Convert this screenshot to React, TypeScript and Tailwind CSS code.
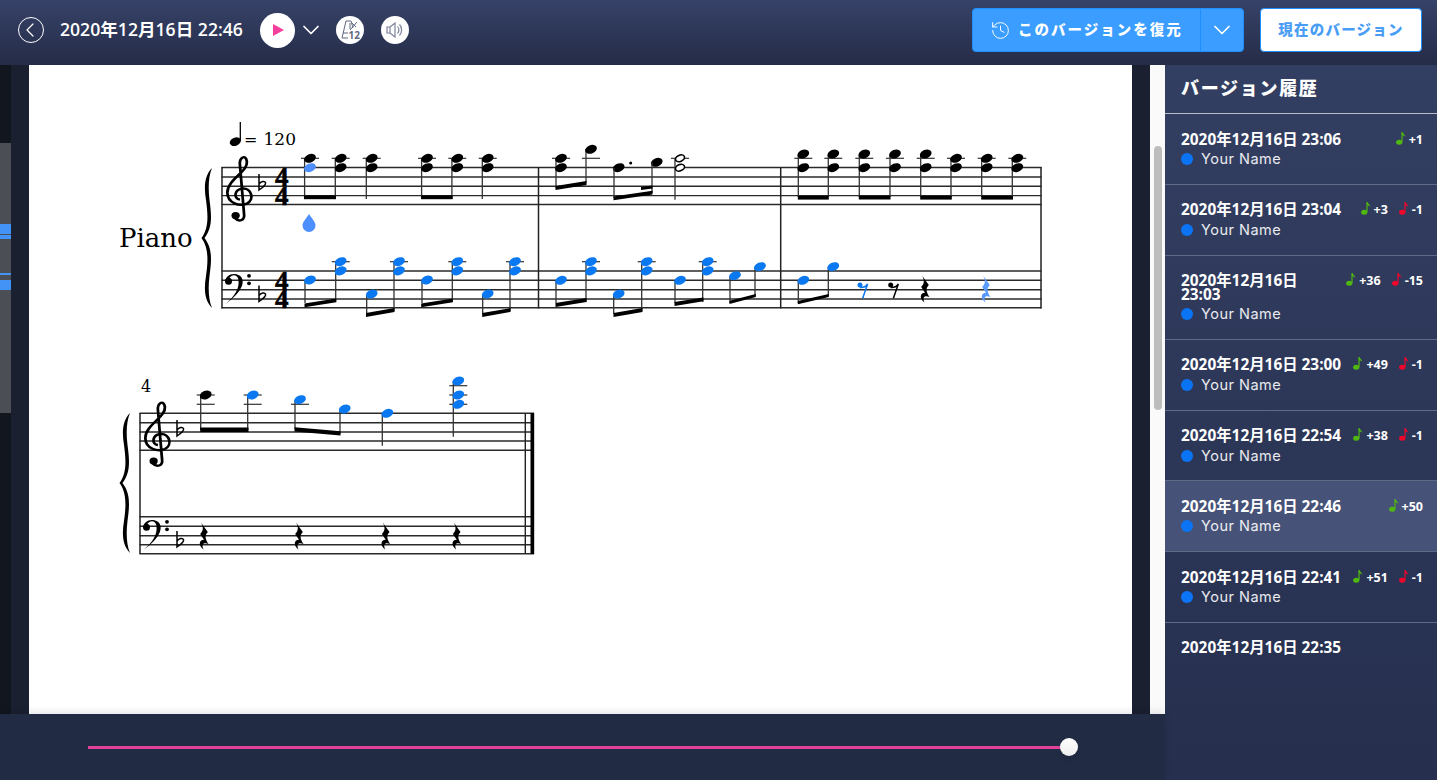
import { ChevronDown, ChevronLeft, History } from "lucide-react";

const BLUE = "#0a78f0";
const LIGHT = "#4d8fff";
const INK = "#000";

const versions = [
  { date: "2020年12月16日 23:06", name: true, add: "+1" },
  { date: "2020年12月16日 23:04", name: true, add: "+3", del: "-1" },
  { date: "2020年12月16日 23:03", name: true, add: "+36", del: "-15" },
  { date: "2020年12月16日 23:00", name: true, add: "+49", del: "-1" },
  { date: "2020年12月16日 22:54", name: true, add: "+38", del: "-1" },
  { date: "2020年12月16日 22:46", name: true, add: "+50", active: true },
  { date: "2020年12月16日 22:41", name: true, add: "+51", del: "-1" },
  { date: "2020年12月16日 22:35" },
];

function NoteIcon({ color }: { color: string }) {
  return (
    <svg width="10" height="14" viewBox="0 0 10 14" className="shrink-0">
      <ellipse cx="3.2" cy="11.2" rx="3.1" ry="2.5" fill={color} />
      <path d="M5.4 11V1h1.2c.3 2 2.6 2.6 2.8 5-.9-1.2-2-1.7-2.8-1.8V11z" fill={color} />
    </svg>
  );
}

function Metronome() {
  return (
    <svg width="20" height="22" viewBox="0 0 20 22" fill="none" stroke="#62677f" strokeWidth="1">
      <path d="M6 2h5l2 7M6 2 2 19h6" />
      <path d="M9 5h2M9 7h2M9 9h2" />
      <path d="m10 11 7-8M12 4l4 4" />
      <path d="M3 14h5" />
      <text x="8.5" y="20" fontSize="10" fontWeight="700" fill="#62677f" stroke="none" fontFamily="Open Sans, sans-serif">12</text>
    </svg>
  );
}

function Speaker() {
  return (
    <svg width="20" height="18" viewBox="0 0 20 18" fill="none" stroke="#7d8299" strokeWidth="1.2">
      <path d="M2 6h3v6H2zM5 6l5-4v14l-5-4" />
      <path d="M12.5 5.5c1.6 2 1.6 5 0 7M14.5 3.5c2.8 3 2.8 8 0 11" />
    </svg>
  );
}

// ---- score drawing, in page coordinates ----

function Head({ x, y, color = INK }: { x: number; y: number; color?: string }) {
  return <ellipse cx={x} cy={y} rx="6.1" ry="4.2" fill={color} transform={`rotate(-22 ${x} ${y})`} />;
}

function Stem({ x, y1, y2 }: { x: number; y1: number; y2: number }) {
  return <line x1={x} x2={x} y1={y1} y2={y2} stroke="#333" strokeWidth="1.3" />;
}

function Ledger({ x, y, w = 9 }: { x: number; y: number; w?: number }) {
  return <line x1={x - w} x2={x + w} y1={y} y2={y} stroke="#333" strokeWidth="1.2" />;
}

function Beam({ x1, y1, x2, y2, h = 3.8 }: { x1: number; y1: number; x2: number; y2: number; h?: number }) {
  return <polygon points={`${x1},${y1 - h / 2} ${x2},${y2 - h / 2} ${x2},${y2 + h / 2} ${x1},${y1 + h / 2}`} fill={INK} />;
}

function Staff({ x1, x2, ys }: { x1: number; x2: number; ys: number[] }) {
  return (
    <>
      {ys.map((y) => (
        <line key={y} x1={x1} x2={x2} y1={y} y2={y} stroke="#2a2a2a" strokeWidth="1.4" />
      ))}
    </>
  );
}

function TrebleClef({ x, y }: { x: number; y: number }) {
  return (
    <g transform={`translate(${x} ${y}) scale(1.15 1)`}>
      <path
        d="M-5 22C-1 27 4.500 25 3.500 18L0-30C-1-38 5-42 6-34C7-24-11-16-11-3C-11 8 0 11 6 8C13 4 10-8 2-7C-5-6-6 3 0 4"
        fill="none"
        stroke={INK}
        strokeWidth="2.400"
      />
      <circle cx="-3.800" cy="20" r="3.600" fill={INK} />
    </g>
  );
}

function BassClef({ x, y }: { x: number; y: number }) {
  return (
    <g transform={`translate(${x} ${y})`}>
      <path d="M-.5 1.500C-1-5 7-8.500 13-5C20-1 18 11-1 24C9 16 13.500 8 12.500 0C12-6 6-6.500 3.500-2.500z" fill={INK} />
      <circle cx="2.500" cy="1" r="3.500" fill={INK} />
      <circle cx="23" cy="-4.500" r="1.900" fill={INK} />
      <circle cx="23" cy="3" r="1.900" fill={INK} />
    </g>
  );
}

function Flat({ x, y }: { x: number; y: number }) {
  return (
    <g transform={`translate(${x} ${y})`}>
      <path d="M-3-11V5C0 3 4.500 0 3.500-2.500C2.500-4.500-1-3.500-3-1" fill="none" stroke={INK} strokeWidth="1.500" />
    </g>
  );
}

function TimeSig({ x, y }: { x: number; y: number }) {
  return (
    <g fontFamily="Liberation Serif, serif" fontWeight="700" fontSize="27" textAnchor="middle" fill={INK} stroke={INK} strokeWidth=".6">
      <text x={x} y={y + 18.500}>4</text>
      <text x={x} y={y + 37}>4</text>
    </g>
  );
}

function Brace({ dx = 0, dy = 0 }: { dx?: number; dy?: number }) {
  return (
    <path
      transform={`translate(${dx} ${dy})`}
      d="M212 168C204 176 204 188 206 200C208 215 209 228 201.500 238C209 248 208 262 206 276C204 288 204 300 212 308C208.500 300 208 288 209.500 276C212 258 212 248 204.500 238C212 228 212 218 209.500 200C208 188 208.500 176 212 168Z"
      fill={INK}
    />
  );
}

function QuarterRest({ x, y, color = INK }: { x: number; y: number; color?: string }) {
  return (
    <path
      transform={`translate(${x} ${y})`}
      d="M-3-13.500L3.800-4C1-1 .5 2 4.500 8C0 6-3 7.500-.5 13.500C-5.500 10-5.500 4 0 3.800L-3.800-2C-1-5 0-8-3-13.500Z"
      fill={color}
    />
  );
}

function EighthRest({ x, y, color = INK }: { x: number; y: number; color?: string }) {
  return (
    <g transform={`translate(${x} ${y})`}>
      <circle cx="-3.300" cy="-1.700" r="2.500" fill={color} />
      <path d="M-3.300 .8C-.5 1 2.500 0 4.300-2.700L-.6 11.600" fill="none" stroke={color} strokeWidth="1.500" />
    </g>
  );
}

// treble chords sitting on the ledger line, stems down to a beam or free
const m1Treble = [310, 340.7, 371.7, 427, 457.3, 487.7];
const m3Upper = [803.3, 833.3, 864.3, 895, 925.7];
const m3Lower = [956, 986.7, 1017.3];
const bassChords = [340.7, 399, 457.3, 515, 591, 646.7, 707.7];

function Score() {
  return (
    <svg viewBox="29 65 1103 649" width="1103" height="649" className="block">
      {/* tempo */}
      <ellipse cx="235.300" cy="141.700" rx="5.800" ry="4.100" fill={INK} transform="rotate(-22 235.300 141.700)" />
      <line x1="240.300" x2="240.300" y1="141" y2="122" stroke={INK} strokeWidth="1.300" />
      <g fontFamily="DejaVu Serif, serif" fill={INK}>
        <text x="244" y="144.500" fontSize="16">=</text>
        <text x="263.500" y="144.500" fontSize="17">120</text>
        <text x="119" y="247" fontSize="26">Piano</text>
        <text x="141" y="392" fontSize="16">4</text>
      </g>

      {/* system 1 */}
      <Staff x1={221.500} x2={1041.500} ys={[167.500, 177, 186.300, 195.600, 204.500]} />
      <Staff x1={221.500} x2={1041.500} ys={[271, 280.300, 289.700, 299, 307.700]} />
      {[222, 538.500, 780.700, 1041].map((x) => (
        <line key={x} x1={x} x2={x} y1="167" y2="308.400" stroke="#222" strokeWidth="1.500" />
      ))}
      <Brace />
      <TrebleClef x={240} y={195.600} />
      <BassClef x={226} y={280.300} />
      <Flat x={262} y={185} />
      <Flat x={262} y={296.500} />
      <TimeSig x={281.700} y={167.500} />
      <TimeSig x={281.700} y={271} />

      {/* system 1 treble, bar 1 */}
      {m1Treble.map((x, i) => (
        <g key={x}>
          <Ledger x={x} y={158.300} />
          <Stem x={x - 5.400} y1={158} y2={199} />
          <Head x={x} y={158.300} />
          <Head x={x} y={167.700} color={i === 0 ? LIGHT : INK} />
        </g>
      ))}
      <Beam x1={304} y1={197.300} x2={336} y2={197.300} />
      <Beam x1={421} y1={197.300} x2={452.600} y2={197.300} />
      <path d="M309 214C312 219 315.500 221.500 315.500 225.500A6.500 6.500 0 0 1 302.500 225.500C302.500 221.500 306 219 309 214Z" fill={LIGHT} />

      {/* bar 2 treble */}
      <Ledger x={561} y={158.300} />
      <Ledger x={591} y={158.300} />
      <Stem x={556} y1={158} y2={188} />
      <Stem x={586} y1={149} y2={183} />
      <Head x={561} y={158.300} />
      <Head x={561} y={167.700} />
      <Head x={591} y={149.300} />
      <Beam x1={555.500} y1={188} x2={586.500} y2={183} />
      <Head x={618.700} y={167.700} />
      <circle cx="630.700" cy="163" r="1.500" fill={INK} />
      <Head x={656.700} y={162.300} />
      <Stem x={614} y1={168} y2={198} />
      <Stem x={652} y1={162} y2={193} />
      <Beam x1={613.500} y1={198.300} x2={652.500} y2={192.700} />
      <Beam x1={641} y1={188.500} x2={652.500} y2={187} h={3} />
      <Ledger x={680} y={158.300} />
      <Stem x={675} y1={159} y2={199.700} />
      {[158.300, 167.700].map((y) => (
        <ellipse key={y} cx="680" cy={y} rx="4.700" ry="3.100" fill="#fff" stroke={INK} strokeWidth="1.600" transform={`rotate(-22 680 ${y})`} />
      ))}

      {/* bar 3 treble */}
      {m3Upper.map((x) => (
        <g key={x}>
          <Ledger x={x} y={158.300} />
          <Stem x={x - 5} y1={155} y2={197} />
          <Head x={x} y={154} />
          <Head x={x} y={167.700} />
        </g>
      ))}
      {m3Lower.map((x) => (
        <g key={x}>
          <Ledger x={x} y={158.300} />
          <Stem x={x - 5} y1={158} y2={197} />
          <Head x={x} y={158.300} />
          <Head x={x} y={167.700} />
        </g>
      ))}
      <Beam x1={797.800} y1={197.700} x2={828.800} y2={197.700} />
      <Beam x1={858.800} y1={197.700} x2={890.500} y2={197.700} />
      <Beam x1={920.200} y1={197.700} x2={951.800} y2={197.700} />
      <Beam x1={981.200} y1={197.700} x2={1013} y2={197.700} />

      {/* bass chords */}
      {bassChords.map((x) => (
        <g key={x}>
          <Ledger x={x} y={261.700} />
          <Stem x={x - 5} y1={262} y2={x === 707.7 || x < 360 || x === 457.3 || x === 591 ? 302 : 311} />
          <Head x={x} y={261.700} color={BLUE} />
          <Head x={x} y={270.900} color={BLUE} />
        </g>
      ))}
      {[
        [310, 280],
        [371.700, 294],
        [427, 280],
        [487.700, 294],
        [561, 280.300],
        [618.700, 294],
        [680, 280.300],
        [735, 275.700],
        [760, 266.700],
        [803.300, 280.300],
        [833.300, 266.700],
      ].map(([x, y]) => (
        <g key={x}>
          <Stem x={x - 5} y1={y} y2={y > 290 ? 314 : x === 760 || x === 833.300 ? 296 : 303} />
          <Head x={x} y={y} color={BLUE} />
        </g>
      ))}
      <Beam x1={304.500} y1={305.300} x2={336.200} y2={300.300} />
      <Beam x1={366} y1={315} x2={394.500} y2={310} />
      <Beam x1={421.200} y1={305.300} x2={452.800} y2={300.300} />
      <Beam x1={482.200} y1={315} x2={510.500} y2={310} />
      <Beam x1={555.500} y1={305} x2={586.500} y2={300} />
      <Beam x1={613.500} y1={315} x2={642.500} y2={310} />
      <Beam x1={674.500} y1={304} x2={703.500} y2={299.300} />
      <Beam x1={729.500} y1={302.300} x2={755.800} y2={295.500} h={3.200} />
      <Beam x1={797.800} y1={302.700} x2={828.800} y2={295.500} h={3.200} />
      <EighthRest x={863.300} y={286.700} color={BLUE} />
      <EighthRest x={894} y={286.700} />
      <QuarterRest x={925} y={289} />
      <QuarterRest x={986} y={289} color="#5b9bff" />

      {/* system 2 */}
      <Staff x1={139.500} x2={534} ys={[413.300, 422.700, 432, 441, 450.300]} />
      <Staff x1={139.500} x2={534} ys={[516.700, 526.300, 535.700, 544.700, 553.700]} />
      <line x1="140" x2="140" y1="413" y2="554" stroke="#222" strokeWidth="1.500" />
      <line x1="525.300" x2="525.300" y1="413" y2="554" stroke="#222" strokeWidth="1.400" />
      <rect x="530.500" y="413" width="3.700" height="141" fill={INK} />
      <Brace dx={-82} dy={245} />
      <TrebleClef x={158} y={441} />
      <BassClef x={144} y={526.300} />
      <Flat x={180} y={431} />
      <Flat x={180} y={542} />

      {[[205.700, 395], [252.700, 395]].map(([x, y]) => (
        <g key={x}>
          <Ledger x={x} y={395} />
          <Ledger x={x} y={404.300} />
          <Stem x={x - 5} y1={y} y2={430} />
        </g>
      ))}
      <Head x={205.700} y={395} />
      <Head x={252.700} y={395} color={BLUE} />
      <Beam x1={200.200} y1={429.700} x2={248.500} y2={429.700} h={4.400} />
      <Ledger x={300} y={404.300} />
      <Stem x={295} y1={400} y2={429} />
      <Head x={300} y={399.700} color={BLUE} />
      <Stem x={340} y1={409} y2={434} />
      <Head x={344.700} y={409} color={BLUE} />
      <Beam x1={294.500} y1={429.300} x2={340.500} y2={433.300} h={4.200} />
      <Stem x={382.300} y1={414} y2={445.700} />
      <Head x={387.300} y={413.300} color={BLUE} />
      <Ledger x={458.300} y={385.700} />
      <Ledger x={458.300} y={395} />
      <Ledger x={458.300} y={404.300} />
      <Stem x={453.300} y1={381} y2={436.700} />
      <Head x={458.300} y={381} color={BLUE} />
      <Head x={458.300} y={395} color={BLUE} />
      <Head x={458.300} y={404.300} color={BLUE} />
      {[204, 299, 385.700, 456.700].map((x) => (
        <QuarterRest key={x} x={x} y={536} />
      ))}
    </svg>
  );
}

export default function App() {
  return (
    <div className="flex h-[780px] w-[1437px] flex-col overflow-hidden bg-[#1a2030] font-['Open_Sans','Noto_Sans_CJK_JP',sans-serif] text-white">
      <header className="flex h-[65px] shrink-0 items-center bg-gradient-to-b from-[#364268] to-[#252c47] pr-[15px] pb-[5px]">
        <button className="ml-[18px] flex h-[26px] w-[26px] items-center justify-center rounded-full border-[1.5px] border-white">
          <ChevronLeft size={24} strokeWidth={1.200} className="-ml-0.5" />
        </button>
        <h1 className="ml-[16px] text-[17.600px] leading-none font-semibold">2020年12月16日 22:46</h1>
        <button className="ml-[17px] flex h-[35px] w-[35px] items-center justify-center rounded-full bg-white">
          <span className="ml-0.5 h-0 w-0 border-y-[6px] border-l-[11px] border-y-transparent border-l-[#f43f9e]" />
        </button>
        <ChevronDown size={28} strokeWidth={1.500} className="ml-[2px]" />
        <button className="ml-[11px] flex h-[28px] w-[28px] items-center justify-center rounded-full bg-white">
          <Metronome />
        </button>
        <button className="ml-[17px] flex h-[28px] w-[28px] items-center justify-center rounded-full bg-white">
          <Speaker />
        </button>
        <div className="ml-auto flex h-[44px] overflow-hidden rounded-[4px] border border-[#1e8fff] bg-[#3b9dff]">
          <button className="flex w-[228px] items-center border-r border-[#1e8fff] pl-[17px] text-[14.500px] font-black tracking-[2px]">
            <History size={21} strokeWidth={1.100} />
            <span className="ml-[7px]">このバージョンを復元</span>
          </button>
          <button className="flex w-[42px] items-center justify-center">
            <ChevronDown size={28} strokeWidth={1.500} />
          </button>
        </div>
        <button className="ml-[16px] h-[44px] w-[162px] rounded-[4px] border border-[#1e8fff] bg-white text-[14.500px] font-black tracking-[1.200px] text-[#4a9df5]">
          現在のバージョン
        </button>
      </header>

      <div className="flex min-h-0 flex-1">
        <div className="flex w-[1165px] flex-col">
          <div className="flex min-h-0 flex-1">
            <div className="h-full w-[11px] bg-[#12161f] pt-[78px]">
              <div className="relative h-[270px] bg-[#4b4e55]">
                <span className="absolute top-[81px] h-[10px] w-full bg-[#4293f5]" />
                <span className="absolute top-[92px] h-[4px] w-full bg-[#4293f5]" />
                <span className="absolute top-[130px] h-[2px] w-full bg-[#4293f5]" />
                <span className="absolute top-[137px] h-[10px] w-full bg-[#4293f5]" />
              </div>
            </div>
            <div className="w-[18px] bg-[#1a2030]" />
            <main className="w-[1103px] bg-white">
              <Score />
            </main>
            <div className="w-[18px] bg-[#1a2030]" />
            <div className="w-[15px] bg-[#fafafa] pt-[81px] pl-[4px]">
              <div className="h-[264px] w-[8px] rounded-full bg-[#bdbdbd]" />
            </div>
          </div>
          <div className="relative flex h-[66px] shrink-0 items-center bg-[#212b44] pl-[88px] shadow-[0_-2px_8px_rgba(0,0,0,0.1)]">
            <div className="h-[3px] w-[981px] bg-[#e0429a]" />
            <div className="-ml-[9px] h-[18px] w-[18px] rounded-full bg-gradient-to-b from-white to-[#eeeeee] shadow-md" />
          </div>
        </div>

        <aside className="flex w-[272px] flex-col bg-gradient-to-b from-[#333f62] to-[#262f4e]">
          <h2 className="h-[49px] shrink-0 border-b border-[#b9bdca] pt-[11px] pl-[16px] text-[18px] leading-[24px] font-black tracking-[1.700px]">
            バージョン履歴
          </h2>
          {versions.map((v, i) => (
            <div
              key={v.date}
              className={`pt-[18.500px] pr-[14px] pl-[16px] ${i < versions.length - 1 ? "border-b border-[#5f6a86] pb-[14.750px]" : ""} ${v.active ? "bg-[#465277]" : ""}`}
            >
              <div className="flex justify-between gap-[10px]">
                <div className="text-[15.400px] leading-[13.500px] font-bold">{v.date}</div>
                {v.add && (
                  <div className="flex shrink-0 items-start gap-[11px] text-[12.500px] leading-[13px] font-bold">
                    <span className="flex items-start gap-[3px]">
                      <span className="-mt-[2px]">
                        <NoteIcon color="#4fb80f" />
                      </span>
                      {v.add}
                    </span>
                    {v.del && (
                      <span className="flex items-start gap-[3px]">
                        <span className="-mt-[2px]">
                          <NoteIcon color="#f0062a" />
                        </span>
                        {v.del}
                      </span>
                    )}
                  </div>
                )}
              </div>
              {v.name && (
                <div className="mt-[3px] flex h-[20px] items-center gap-[8px] font-['Inter',sans-serif] text-[14.500px] tracking-[0.500px] text-white/90">
                  <span className="h-[12px] w-[12px] rounded-full bg-[#0a74f5]" />
                  Your Name
                </div>
              )}
            </div>
          ))}
        </aside>
      </div>
    </div>
  );
}
